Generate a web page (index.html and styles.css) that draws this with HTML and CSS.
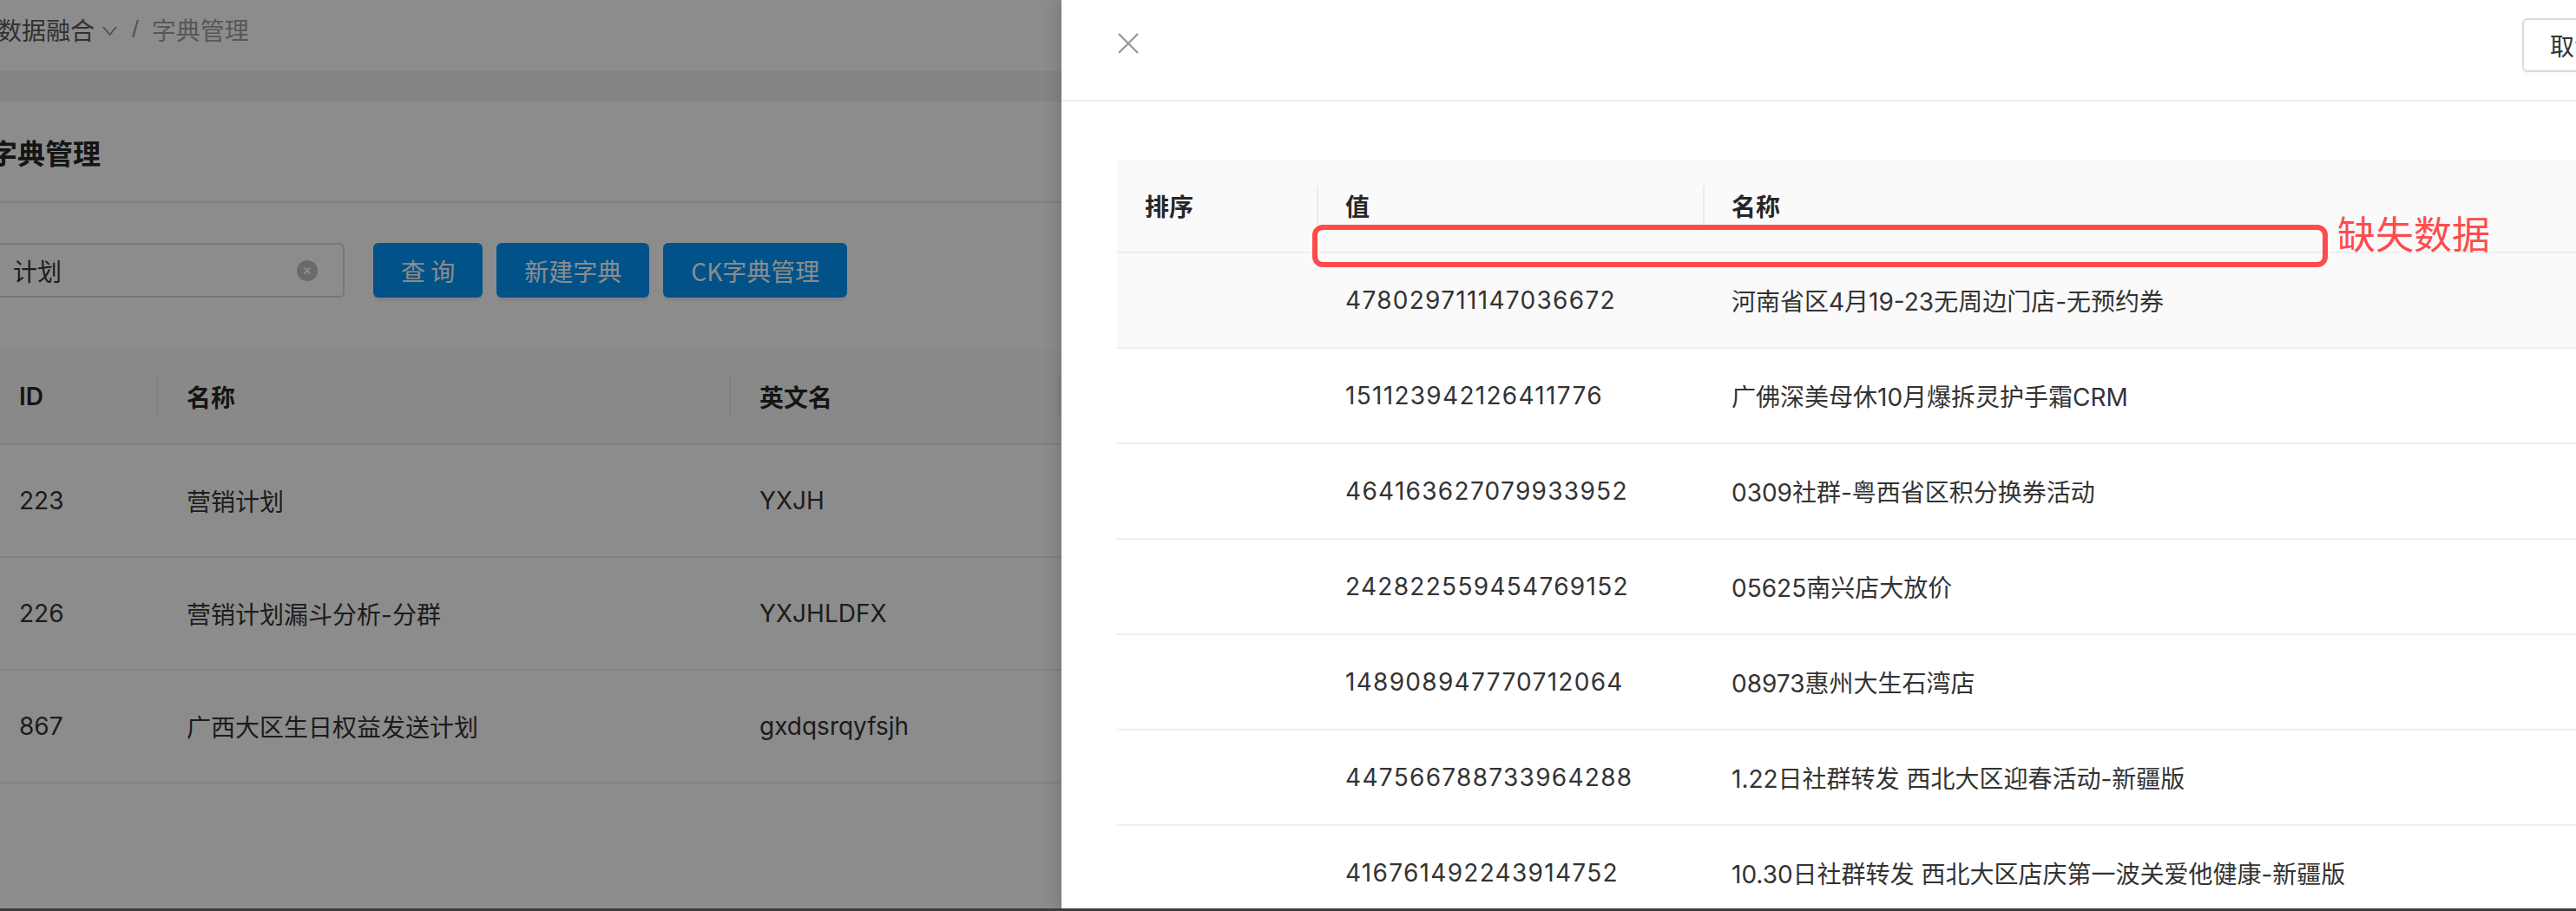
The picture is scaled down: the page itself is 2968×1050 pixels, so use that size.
FILE: index.html
```html
<!DOCTYPE html>
<html lang="zh-CN">
<head>
<meta charset="utf-8">
<title>字典管理</title>
<link rel="stylesheet" href="styles.css">
</head>
<body>
<div class="app">
  <div class="page">
    <div class="crumbs">
      <span class="crumb-parent">数据融合</span>
      <svg class="crumb-chevron" width="17" height="11" viewBox="0 0 17 11"><polyline points="1,1 8.5,10 16,1" fill="none" stroke="#8c8c8c" stroke-width="1.6"/></svg>
      <span class="crumb-sep">/</span>
      <span class="crumb-current">字典管理</span>
    </div>
    <div class="band"></div>
    <div class="card">
      <div class="card-title">字典管理</div>
      <div class="search">
        <div class="input">
          <span class="input-text">计划</span>
          <span class="input-clear">
            <svg width="24" height="24" viewBox="0 0 24 24"><circle cx="12" cy="12" r="12" fill="#c2c2c2"/><path d="M8.5 8.5 L15.5 15.5 M15.5 8.5 L8.5 15.5" stroke="#fff" stroke-width="1.8"/></svg>
          </span>
        </div>
        <button class="btn primary">查 询</button>
        <button class="btn primary">新建字典</button>
        <button class="btn primary">CK字典管理</button>
      </div>
      <table class="grid">
        <colgroup><col class="c-id"><col class="c-name"><col class="c-en"><col></colgroup>
        <thead>
          <tr><th>ID</th><th class="div">名称</th><th class="div">英文名</th><th class="div"></th></tr>
        </thead>
        <tbody>
          <tr><td>223</td><td>营销计划</td><td>YXJH</td><td></td></tr>
          <tr><td>226</td><td>营销计划漏斗分析-分群</td><td>YXJHLDFX</td><td></td></tr>
          <tr><td>867</td><td>广西大区生日权益发送计划</td><td>gxdqsrqyfsjh</td><td></td></tr>
        </tbody>
      </table>
    </div>
  </div>

  <div class="mask"></div>

  <aside class="drawer">
    <div class="drawer-head">
      <svg class="close" width="24" height="24" viewBox="0 0 24 24"><path d="M1 1 L23 23 M23 1 L1 23" stroke="#9a9a9a" stroke-width="2.4"/></svg>
      <button class="btn ghost">取消</button>
    </div>
    <div class="drawer-body">
      <table class="dict">
        <colgroup><col class="d-sort"><col class="d-val"><col></colgroup>
        <thead>
          <tr><th>排序</th><th class="div">值</th><th class="div">名称</th></tr>
        </thead>
        <tbody>
          <tr class="hover"><td></td><td class="num">478029711147036672</td><td>河南省区4月19-23无周边门店-无预约券</td></tr>
          <tr><td></td><td class="num">151123942126411776</td><td>广佛深美母休10月爆拆灵护手霜CRM</td></tr>
          <tr><td></td><td class="num">464163627079933952</td><td>0309社群-粤西省区积分换券活动</td></tr>
          <tr><td></td><td class="num">242822559454769152</td><td>05625南兴店大放价</td></tr>
          <tr><td></td><td class="num">148908947770712064</td><td>08973惠州大生石湾店</td></tr>
          <tr><td></td><td class="num">447566788733964288</td><td>1.22日社群转发 西北大区迎春活动-新疆版</td></tr>
          <tr><td></td><td class="num">416761492243914752</td><td>10.30日社群转发 西北大区店庆第一波关爱他健康-新疆版</td></tr>
        </tbody>
      </table>
    </div>
    <div class="note-box"></div>
    <div class="note-text">缺失数据</div>
  </aside>

  <div class="bottom-edge"></div>
</div>
</body>
</html>
```

FILE: styles.css
```css
* { box-sizing: border-box; }

html, body {
  margin: 0;
  padding: 0;
  width: 2968px;
  height: 1050px;
  overflow: hidden;
  background: #ffffff;
  font-family: "Inter", "Noto Sans CJK SC", sans-serif;
  font-size: 28px;
  color: #333333;
}

.app {
  position: relative;
  width: 2968px;
  height: 1050px;
  overflow: hidden;
}

/* ---------- background page ---------- */
.page {
  margin-left: -12px;
  width: 2980px;
  height: 1050px;
  background: #ffffff;
}

.crumbs {
  height: 82px;
  padding: 14px 0 0 9px;
  display: flex;
  align-items: flex-start;
  line-height: 40px;
}
.crumb-parent { color: #5a5a5a; font-family: "Noto Sans CJK SC", sans-serif; }
.crumb-chevron { margin: 16px 0 0 9px; }
.crumb-sep { color: #9a9a9a; margin: 0 15px 0 17px; font-family: "Liberation Sans", sans-serif; }
.crumb-current { color: #a0a0a0; font-family: "Noto Sans CJK SC", sans-serif; }

.band {
  height: 35px;
  background: #f0f2f5;
}

.card {
  background: #ffffff;
}

.card-title {
  height: 117px;
  display: flex;
  align-items: center;
  font-size: 32px;
  font-weight: 700;
  color: #262626;
  font-family: "Noto Sans CJK SC", sans-serif;
  border-bottom: 2px solid #e9e9e9;
}

.search {
  display: flex;
  align-items: flex-start;
  gap: 16px;
  padding-top: 46px;
  height: 169px;
}

.input {
  width: 409px;
  height: 63px;
  border: 2px solid #d9d9d9;
  border-radius: 6px;
  display: flex;
  align-items: center;
  padding: 0 29px 0 25px;
  margin-right: 17px;
}
.input-text { flex: 1; color: #333; font-family: "Noto Sans CJK SC", sans-serif; }
.input-clear { display: flex; }

.btn {
  height: 63px;
  border-radius: 6px;
  font-size: 28px;
  font-family: "Noto Sans CJK SC", sans-serif;
  padding: 0 32px;
  cursor: pointer;
  white-space: nowrap;
}
.btn.primary {
  background: #0096fa;
  color: #ffffff;
  border: none;
  box-shadow: 0 4px 0 rgba(0, 0, 0, 0.05);
}
.btn.ghost {
  background: #ffffff;
  color: #333333;
  border: 2px solid #d9d9d9;
  padding: 0 30px;
  height: 62px;
  box-shadow: 0 4px 0 rgba(0, 0, 0, 0.02);
}

.grid {
  border-collapse: collapse;
  table-layout: fixed;
  width: 2600px;
}
.grid .c-id { width: 193px; }
.grid .c-name { width: 660px; }
.grid .c-en { width: 379px; }
.grid th, .grid td {
  text-align: left;
  padding: 0 0 0 34px;
  white-space: nowrap;
  border-bottom: 2px solid #ececec;
}
.grid th {
  height: 109px;
  background: #fafafa;
  font-weight: 600;
  color: #262626;
  position: relative;
}
.grid td { height: 130px; color: #333; }

th.div::before {
  content: "";
  position: absolute;
  left: -1px;
  top: 50%;
  width: 2px;
  height: 46px;
  margin-top: -23px;
  background: #ebebeb;
}

/* ---------- mask ---------- */
.mask {
  position: absolute;
  inset: 0;
  background: rgba(0, 0, 0, 0.45);
}

/* ---------- drawer ---------- */
.drawer {
  position: absolute;
  top: 0;
  left: 1223px;
  width: 1820px;
  height: 1050px;
  background: #ffffff;
  box-shadow: -6px 0 16px rgba(0, 0, 0, 0.12);
}

.drawer-head {
  height: 117px;
  border-bottom: 2px solid #ececec;
  display: flex;
  align-items: flex-start;
  padding: 21px 17px 0 65px;
}
.close { margin-top: 17px; }
.drawer-head .btn { margin-left: auto; }

.drawer-body {
  padding: 67px 0 0 64px;
}

.dict {
  border-collapse: collapse;
  table-layout: fixed;
  width: 1720px;
}
.dict .d-sort { width: 231px; }
.dict .d-val { width: 445px; }
.dict th, .dict td {
  text-align: left;
  padding: 0 0 0 32px;
  white-space: nowrap;
  border-bottom: 2px solid #efefef;
}
.dict th {
  height: 107px;
  background: #fafafa;
  font-weight: 600;
  color: #262626;
  position: relative;
  font-family: "Noto Sans CJK SC", sans-serif;
}
.dict td { height: 110px; color: #333; }
.dict td.num { letter-spacing: 1.3px; }
.dict tr.hover td { background: #fafafa; }

/* annotation */
.note-box {
  position: absolute;
  left: 289px;
  top: 259px;
  width: 1170px;
  height: 49px;
  border: 6px solid #ff4b4b;
  border-radius: 12px;
}
.note-text {
  position: absolute;
  left: 1470px;
  top: 242px;
  font-size: 44px;
  line-height: 52px;
  color: #ff4b4b;
  font-family: "Noto Sans CJK SC", sans-serif;
}

.bottom-edge {
  position: absolute;
  left: 0;
  right: 0;
  bottom: 0;
  height: 3px;
  background: #3c3c3c;
}
```
